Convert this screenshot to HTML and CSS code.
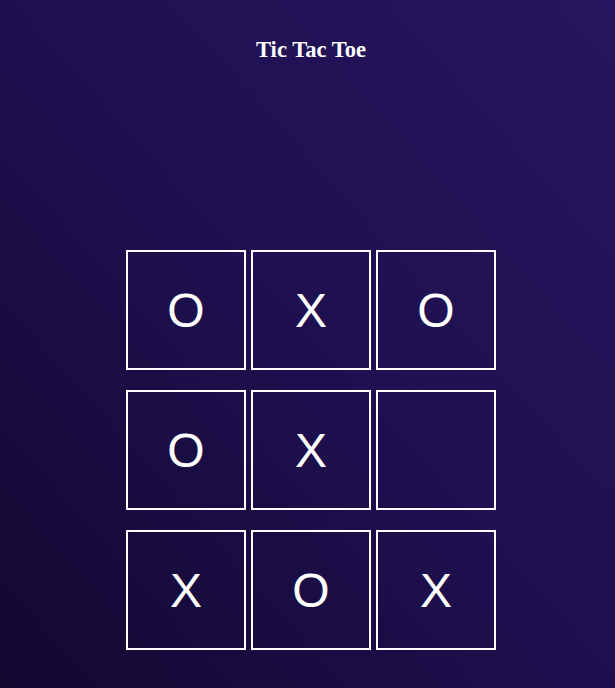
FILE: index.html
```html
<!DOCTYPE html>
<html>
<head>
<meta charset="utf-8">
<link rel="stylesheet" href="styles.css">
</head>
<body>
<div class="page">
  <h1 class="title">Tic Tac Toe</h1>
  <div class="board">
    <div class="cell">O</div>
    <div class="cell">X</div>
    <div class="cell">O</div>
    <div class="cell">O</div>
    <div class="cell">X</div>
    <div class="cell"></div>
    <div class="cell">X</div>
    <div class="cell">O</div>
    <div class="cell">X</div>
  </div>
</div>
</body>
</html>
```
FILE: styles.css
```css
html, body {
  margin: 0;
  padding: 0;
  height: 100%;
}
body {
  background: linear-gradient(to top right, #130830 0%, #1e1050 50%, #26165f 100%);
  color: #fff;
}
.page {
  display: flex;
  flex-direction: column;
  align-items: center;
  padding-left: 7px;
  height: 688px;
  box-sizing: border-box;
}
.title {
  font-family: "Liberation Serif", serif;
  font-weight: bold;
  font-size: 22.6px;
  line-height: 24px;
  margin: 38px 0 0 0;
}
.board {
  display: grid;
  grid-template-columns: repeat(3, 120px);
  grid-auto-rows: 120px;
  column-gap: 5px;
  row-gap: 20px;
  margin-top: 188px;
}
.cell {
  box-sizing: border-box;
  border: 2px solid #fff;
  display: flex;
  align-items: center;
  justify-content: center;
  font-family: "Liberation Sans", Arial, sans-serif;
  font-size: 48px;
  color: #fff;
}
```
